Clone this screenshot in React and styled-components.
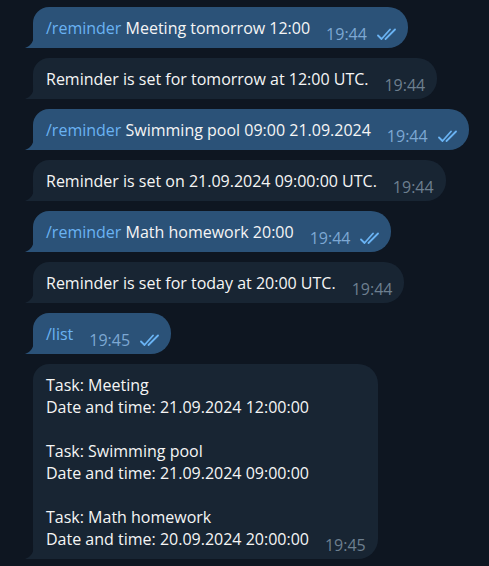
import React from "react";
import styled, { createGlobalStyle } from "styled-components";

const GlobalStyle = createGlobalStyle`
  html, body {
    margin: 0;
    padding: 0;
    background: #0e1621;
  }
  body {
    font-family: "Open Sans", "Noto Sans", sans-serif;
  }
`;

const Chat = styled.div`
  width: 489px;
  height: 566px;
  box-sizing: border-box;
  padding: 7px 0 0 33px;
  display: flex;
  flex-direction: column;
  align-items: flex-start;
  gap: 10px;
  overflow: hidden;
`;

const Bubble = styled.div`
  position: relative;
  display: flex;
  align-items: flex-end;
  box-sizing: border-box;
  padding: 10px ${(p) => (p.$out ? "9px" : "12px")} 3px 13px;
  background: ${(p) => (p.$out ? "#2b5278" : "#182533")};
  border-radius: 16px 20px 20px 0;
  color: #f5f5f5;
  font-size: 16px;
  line-height: 22px;
`;

const Tail = styled.svg`
  position: absolute;
  left: -8px;
  bottom: 0;
  width: 9px;
  height: 14px;
`;

const Text = styled.div`
  margin-bottom: 6px;
  white-space: pre-wrap;
`;

const Command = styled.span`
  color: #6ab3f3;
`;

const Meta = styled.div`
  display: flex;
  align-items: center;
  gap: 10px;
  margin-left: 16px;
  font-size: 16px;
  line-height: 22px;
  color: ${(p) => (p.$out ? "#7da8d3" : "#6d7f8f")};
`;

const Checks = () => (
  <svg width="22" height="12" viewBox="0 0 22 12" fill="none">
    <path
      d="M1 7.5 L4.5 11 L13 1.5 M8.5 11 L18 1.5"
      stroke="#6ab3f3"
      strokeWidth="1.8"
      strokeLinecap="round"
      strokeLinejoin="round"
    />
  </svg>
);

function Message({ out, children, time }) {
  const fill = out ? "#2b5278" : "#182533";
  return (
    <Bubble $out={out}>
      <Tail viewBox="0 0 9 14">
        <path d="M9 0 C9 7 6 12 0 14 L9 14 Z" fill={fill} />
      </Tail>
      <Text>{children}</Text>
      <Meta $out={out}>
        <span>{time}</span>
        {out && <Checks />}
      </Meta>
    </Bubble>
  );
}

export default function App() {
  return (
    <>
      <GlobalStyle />
      <Chat>
        <Message out time="19:44">
          <Command>/reminder</Command> Meeting tomorrow 12:00
        </Message>
        <Message time="19:44">Reminder is set for tomorrow at 12:00 UTC.</Message>
        <Message out time="19:44">
          <Command>/reminder</Command> Swimming pool 09:00 21.09.2024
        </Message>
        <Message time="19:44">Reminder is set on 21.09.2024 09:00:00 UTC.</Message>
        <Message out time="19:44">
          <Command>/reminder</Command> Math homework 20:00
        </Message>
        <Message time="19:44">Reminder is set for today at 20:00 UTC.</Message>
        <Message out time="19:45">
          <Command>/list</Command>
        </Message>
        <Message time="19:45">
          {"Task: Meeting\nDate and time: 21.09.2024 12:00:00\n\nTask: Swimming pool\nDate and time: 21.09.2024 09:00:00\n\nTask: Math homework\nDate and time: 20.09.2024 20:00:00"}
        </Message>
      </Chat>
    </>
  );
}
